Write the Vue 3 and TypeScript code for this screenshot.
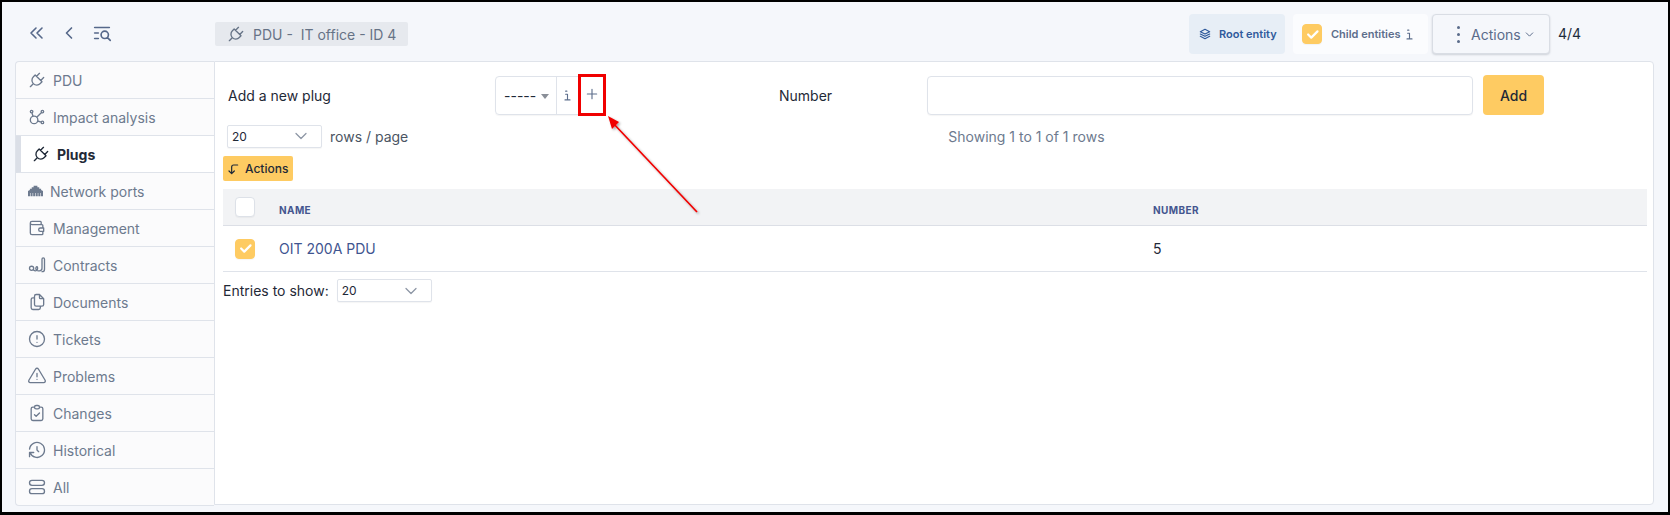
<script setup lang="ts">
const icons: Record<string, string> = {
  plug: 'M9.785 6l8.215 8.215l-2.054 2.054a5.81 5.81 0 1 1 -8.215 -8.215l2.054 -2.054z M4 20l3.5 -3.5 M15 4l-3.5 3.5 M20 9l-3.5 3.5',
  impact: 'M5.931 6.936l1.275 4.249 M12.813 16.794l4.251 1.275 M11.683 12.317l5.759 -5.759 M4 5.5a1.5 1.5 0 1 0 3 0a1.5 1.5 0 1 0 -3 0 M17 5.5a1.5 1.5 0 1 0 3 0a1.5 1.5 0 1 0 -3 0 M17 18.5a1.5 1.5 0 1 0 3 0a1.5 1.5 0 1 0 -3 0 M4 15.5a4.5 4.5 0 1 0 9 0a4.5 4.5 0 1 0 -9 0',
  wallet: 'M17 8v-3a1 1 0 0 0 -1 -1h-10a2 2 0 0 0 0 4h12a1 1 0 0 1 1 1v3m0 4v3a1 1 0 0 1 -1 1h-12a2 2 0 0 1 -2 -2v-12 M20 12v4h-4a2 2 0 0 1 0 -4h4',
  contract: 'M8 16a2.500 2.500 0 1 0 -5 0a2.500 2.500 0 1 0 5 0z M8 18c1 1 3 1 4 0c1 -1 1 -4 0 -4s-2 2 -1 3.500 M13 19h2c2 0 3 -1 3 -3v-11a1.500 1.500 0 0 1 3 0v12c0 2 -1 3 -3 3',
  files: 'M15 3v4a1 1 0 0 0 1 1h4 M18 17h-7a2 2 0 0 1 -2 -2v-10a2 2 0 0 1 2 -2h4l5 5v7a2 2 0 0 1 -2 2z M16 17v2a2 2 0 0 1 -2 2h-7a2 2 0 0 1 -2 -2v-10a2 2 0 0 1 2 -2h2',
  ticket: 'M3 12a9 9 0 1 0 18 0a9 9 0 1 0 -18 0 M12 8v4 M12 16h.01',
  problem: 'M12 9v4 M10.363 3.591l-8.106 13.534a1.914 1.914 0 0 0 1.636 2.871h16.214a1.914 1.914 0 0 0 1.636 -2.87l-8.106 -13.536a1.914 1.914 0 0 0 -3.274 0z M12 16h.01',
  change: 'M9 5h-2a2 2 0 0 0 -2 2v12a2 2 0 0 0 2 2h10a2 2 0 0 0 2 -2v-12a2 2 0 0 0 -2 -2h-2 M9 5a2 2 0 0 1 2 -2h2a2 2 0 0 1 2 2a2 2 0 0 1 -2 2h-2a2 2 0 0 1 -2 -2z M9 14l2 2l4 -4',
  history: 'M12 8v4l2 2 M3.050 11a9 9 0 1 1 .5 4m-.5 5v-5h5',
  all: 'M3 7a3 3 0 0 1 3 -3h12a3 3 0 0 1 3 3v0a3 3 0 0 1 -3 3h-12a3 3 0 0 1 -3 -3z M3 17a3 3 0 0 1 3 -3h12a3 3 0 0 1 3 3v0a3 3 0 0 1 -3 3h-12a3 3 0 0 1 -3 -3z',
  dleft: 'M11 7l-5 5l5 5 M17 7l-5 5l5 5',
  left: 'M15 6l-6 6l6 6',
  listSearch: 'M4 6h16 M4 12h4 M4 18h4 M11 14a4 4 0 1 0 8 0a4 4 0 1 0 -8 0 M18 17l3 3',
  stack: 'M12 4l-8 4l8 4l8 -4l-8 -4 M4 12l8 4l8 -4 M4 16l8 4l8 -4',
  info: 'M9 5h2 M9 10h3v9 M8 19h8',
  plus: 'M12 5v14 M5 12h14',
  corner: 'M19 6h-6a3 3 0 0 0 -3 3v10l-4 -4m8 0l-4 4',
  chevron: 'M6 9l6 6l6 -6',
  check: 'M5 12l5 5l10 -10',
}

const tabs = [
  { label: 'PDU', icon: 'plug' },
  { label: 'Impact analysis', icon: 'impact' },
  { label: 'Plugs', icon: 'plug', active: true },
  { label: 'Network ports', icon: 'ethernet' },
  { label: 'Management', icon: 'wallet' },
  { label: 'Contracts', icon: 'contract' },
  { label: 'Documents', icon: 'files' },
  { label: 'Tickets', icon: 'ticket' },
  { label: 'Problems', icon: 'problem' },
  { label: 'Changes', icon: 'change' },
  { label: 'Historical', icon: 'history' },
  { label: 'All', icon: 'all' },
]
</script>

<template>
  <div class="frame">
    <header class="topbar">
      <div class="nav-icons">
        <svg class="ic nav-a" viewBox="0 0 24 24"><path :d="icons.dleft" /></svg>
        <svg class="ic nav-b" viewBox="0 0 24 24"><path :d="icons.left" /></svg>
        <svg class="ic nav-c" viewBox="0 0 24 24"><path :d="icons.listSearch" /></svg>
      </div>
      <div class="crumb">
        <svg class="ic crumb-ic" viewBox="0 0 24 24"><path :d="icons.plug" /></svg>
        <span class="crumb-text">PDU -&nbsp; IT office - ID 4</span>
      </div>
      <div class="top-right">
        <div class="root-chip">
          <svg class="ic chip-ic" viewBox="0 0 24 24"><path :d="icons.stack" /></svg>
          <span>Root entity</span>
        </div>
        <div class="child-chip">
          <span class="box checked">
            <svg viewBox="0 0 24 24"><path :d="icons.check" /></svg>
          </span>
          <span class="child-label">Child entities</span>
          <svg class="ic child-i" viewBox="0 0 24 24"><path :d="icons.info" /></svg>
        </div>
        <button class="actions-btn" type="button">
          <span class="dots"><i></i><i></i><i></i></span>
          <span>Actions</span>
          <svg class="ic act-chev" viewBox="0 0 24 24"><path :d="icons.chevron" /></svg>
        </button>
        <span class="count">4/4</span>
      </div>
    </header>

    <div class="workspace">
      <nav class="tabs">
        <div
          v-for="t in tabs"
          :key="t.label"
          class="tab"
          :class="{ active: t.active, wide: t.icon === 'ethernet' }"
        >
          <svg v-if="t.icon === 'ethernet'" class="eth" viewBox="0 0 16 12">
            <path d="M0 11.500V6l2-1V3.500h2V2h2V.5h4V2h2v1.500h2V5l2 1v5.500h-2.200V8h-.6v3.500h-2.200V8h-.6v3.500H8.300V8h-.6v3.500H5.500V8h-.6v3.500H2.700V8h-.6v3.500z" />
          </svg>
          <svg v-else class="ic tab-ic" viewBox="0 0 24 24"><path :d="icons[t.icon]" /></svg>
          <span>{{ t.label }}</span>
        </div>
      </nav>

      <main class="panel">
        <div class="form-row">
          <label class="add-label">Add a new plug</label>
          <div class="group-cell">
            <div class="input-group">
              <div class="dash-select">
                <span>-----</span>
                <span class="caret"></span>
              </div>
              <div class="info-cell">
                <svg class="ic" viewBox="0 0 24 24"><path :d="icons.info" /></svg>
              </div>
              <div class="plus-cell">
                <svg class="ic" viewBox="0 0 24 24"><path :d="icons.plus" /></svg>
              </div>
            </div>
          </div>
          <label class="num-label">Number</label>
          <input class="num-input" type="text" />
          <button class="add-btn" type="button">Add</button>
        </div>

        <div class="pager-row">
          <div class="fake-select">
            <span>20</span>
            <svg class="ic" viewBox="0 0 24 24"><path :d="icons.chevron" /></svg>
          </div>
          <span class="rows-label">rows / page</span>
          <span class="showing">Showing 1 to 1 of 1 rows</span>
        </div>

        <button class="mass-btn" type="button">
          <svg class="ic" viewBox="0 0 24 24"><path :d="icons.corner" /></svg>
          <span>Actions</span>
        </button>

        <div class="table">
          <div class="thead">
            <div class="c-check"><span class="box"></span></div>
            <div class="c-name">NAME</div>
            <div class="c-num">NUMBER</div>
          </div>
          <div class="trow">
            <div class="c-check">
              <span class="box checked">
                <svg viewBox="0 0 24 24"><path :d="icons.check" /></svg>
              </span>
            </div>
            <div class="c-name link">OIT 200A PDU</div>
            <div class="c-num">5</div>
          </div>
        </div>

        <div class="entries">
          <span>Entries to show:</span>
          <div class="fake-select">
            <span>20</span>
            <svg class="ic" viewBox="0 0 24 24"><path :d="icons.chevron" /></svg>
          </div>
        </div>
      </main>
    </div>

    <svg class="annotation" width="1670" height="515" viewBox="0 0 1670 515">
      <defs>
        <filter id="soft" x="-20%" y="-20%" width="140%" height="140%">
          <feDropShadow dx="1.500" dy="1.500" stdDeviation="1" flood-color="#000" flood-opacity=".35" />
        </filter>
      </defs>
      <g filter="url(#soft)">
        <path d="M697 212L612 122" stroke="#f00000" stroke-width="1.700" fill="none" />
        <path d="M608 116L619 122L612 129z" fill="#f00000" />
      </g>
      <rect x="579.500" y="75.500" width="25" height="39" fill="none" stroke="#f00000" stroke-width="3" />
    </svg>
  </div>
</template>

<style>
html, body { margin: 0; padding: 0; }
</style>

<style scoped>
* { box-sizing: border-box; }
.frame {
  position: relative;
  width: 1670px;
  height: 515px;
  border: 2px solid #000;
  border-bottom-width: 3px;
  background: #f5f7fb;
  font-family: Inter, "Liberation Sans", sans-serif;
  font-size: 14px;
  color: #1f2937;
  overflow: hidden;
}
.ic {
  fill: none;
  stroke: currentColor;
  stroke-width: 2;
  stroke-linecap: round;
  stroke-linejoin: round;
  display: block;
  flex: none;
}
.topbar {
  height: 59px;
  display: flex;
  align-items: flex-start;
  color: #5f6f8c;
}
.nav-icons {
  width: 213px;
  height: 59px;
  display: flex;
  align-items: center;
  padding: 3px 0 0 23px;
  color: #56688a;
}
.nav-a { width: 24px; height: 24px; stroke-width: 1.600; }
.nav-b { width: 20px; height: 20px; margin-left: 10px; }
.nav-c { width: 22px; height: 22px; margin-left: 12px; stroke-width: 1.800; }
.crumb {
  margin-top: 20px;
  width: 193px;
  height: 24px;
  background: #e6e9ee;
  border-radius: 2px;
  display: flex;
  align-items: center;
  padding-left: 11px;
  color: #667386;
}
.crumb-ic { width: 20px; height: 20px; stroke-width: 1.600; }
.crumb-text { margin-left: 7px; white-space: nowrap; }
.top-right {
  margin-left: auto;
  margin-right: 0;
  width: 479px;
  display: flex;
  align-items: flex-start;
  margin-top: 12px;
}
.root-chip {
  width: 96px;
  height: 40px;
  background: #e7eef6;
  border-radius: 4px;
  display: flex;
  align-items: center;
  padding-left: 9px;
  font-size: 11px;
  font-weight: 600;
  color: #2f5a9c;
}
.chip-ic { width: 14px; height: 14px; margin-right: 7px; }
.child-chip {
  margin-left: 8px;
  width: 135px;
  height: 40px;
  background: #fbfcfe;
  border-radius: 4px;
  display: flex;
  align-items: center;
  padding-left: 9px;
  font-size: 11px;
  font-weight: 600;
  color: #5d6e8c;
}
.child-label { margin-left: 9px; white-space: nowrap; }
.child-i { width: 15px; height: 15px; margin-left: 1px; stroke-width: 1.800; }
.box {
  width: 20px;
  height: 20px;
  border-radius: 4px;
  border: 1px solid #dde1e8;
  background: #fff;
  display: block;
  flex: none;
  box-shadow: 0 1px 1px rgba(0, 0, 0, .04);
}
.box.checked {
  background: #fecb62;
  border-color: #fecb62;
  display: flex;
  align-items: center;
  justify-content: center;
}
.box.checked svg {
  width: 15px;
  height: 15px;
  fill: none;
  stroke: #fff;
  stroke-width: 3.500;
  stroke-linecap: round;
  stroke-linejoin: round;
}
.actions-btn {
  margin-left: 4px;
  width: 118px;
  height: 40px;
  border: 1px solid #d9dde4;
  border-radius: 4px;
  background: #f5f7fb;
  box-shadow: 0 1px 2px rgba(30, 40, 60, .18);
  display: flex;
  align-items: center;
  padding: 0 0 0 24px;
  font: inherit;
  color: #5a6b8a;
}
.dots { display: flex; flex-direction: column; gap: 4px; margin-right: 11px; }
.dots i { width: 3px; height: 3px; border-radius: 50%; background: #5a6b8a; display: block; }
.act-chev { width: 13px; height: 13px; margin-left: 2px; stroke-width: 1.800; }
.count { margin-left: 8px; line-height: 40px; color: #1f2d3d; }

.workspace {
  display: flex;
  align-items: flex-start;
  padding-left: 13px;
}
.tabs {
  width: 199px;
  flex: none;
  border: 1px solid #dfe3ea;
  border-right: 0;
  border-radius: 4px 0 0 4px;
  background: #fbfbfc;
  overflow: hidden;
}
.tab {
  height: 37px;
  border-bottom: 1px solid #dfe3ea;
  display: flex;
  align-items: center;
  padding-left: 11px;
  color: #6d7a8e;
  white-space: nowrap;
}
.tab:last-child { border-bottom: 0; height: 36px; }
.tab-ic { width: 20px; height: 20px; margin-right: 6px; stroke-width: 1.600; }
.tab.wide { padding-left: 12px; }
.eth { width: 15px; height: 12px; margin-right: 7px; fill: #6d7a8e; flex: none; }
.tab.active {
  background: #fff;
  border-left: 5px solid #dbdfe7;
  padding-left: 10px;
  font-weight: 700;
  color: #1f2937;
  margin-right: 0;
}
.tab.active .tab-ic { color: #1f2937; }
.panel {
  width: 1440px;
  height: 444px;
  background: #fff;
  border: 1px solid #dfe3ea;
  border-radius: 0 4px 4px 0;
  padding: 13px 0 0 8px;
}
.form-row { display: flex; align-items: center; height: 40px; }
.add-label { width: 272px; padding-left: 5px; flex: none; }
.group-cell { width: 284px; flex: none; }
.input-group {
  width: 111px;
  height: 39px;
  border: 1px solid #dfe3ea;
  border-radius: 4px;
  display: flex;
  box-shadow: 0 1px 1px rgba(0, 0, 0, .04);
}
.dash-select {
  width: 61px;
  display: flex;
  align-items: center;
  padding-left: 8px;
  border-right: 1px solid #dfe3ea;
  color: #1f2937;
}
.caret {
  margin-left: 5px;
  margin-top: 2px;
  border-left: 4px solid transparent;
  border-right: 4px solid transparent;
  border-top: 5px solid #8a8f98;
}
.info-cell {
  width: 21px;
  display: flex;
  align-items: center;
  justify-content: center;
  color: #5d6e8c;
}
.info-cell .ic { width: 15px; height: 15px; stroke-width: 1.800; }
.plus-cell {
  flex: 1;
  display: flex;
  align-items: center;
  justify-content: center;
  color: #5d6e8c;
  padding-bottom: 3px;
}
.plus-cell .ic { width: 16px; height: 16px; stroke-width: 1.700; }
.num-label { width: 148px; flex: none; }
.num-input {
  width: 546px;
  height: 39px;
  flex: none;
  border: 1px solid #dfe3ea;
  border-radius: 4px;
  background: #fff;
  outline: none;
  box-shadow: 0 1px 1px rgba(0, 0, 0, .04);
}
.add-btn {
  margin-left: 10px;
  width: 61px;
  height: 40px;
  border: 0;
  border-radius: 4px;
  background: #fecb62;
  font: inherit;
  font-weight: 500;
  color: #1f2937;
}
.pager-row {
  display: flex;
  align-items: center;
  height: 22px;
  margin-top: 10px;
  padding-left: 4px;
}
.fake-select {
  width: 95px;
  height: 23px;
  border: 1px solid #dfe3ea;
  border-radius: 2px;
  background: #fff;
  display: flex;
  align-items: center;
  justify-content: space-between;
  padding: 0 10px 0 4px;
  font-size: 12px;
  color: #1f2937;
  box-shadow: 0 1px 1px rgba(0, 0, 0, .04);
  flex: none;
}
.fake-select .ic { width: 20px; height: 20px; color: #8d96a5; stroke-width: 1.500; }
.rows-label { margin-left: 8px; color: #4b5563; }
.showing { margin-left: 540px; color: #6d7a8e; }
.mass-btn {
  margin-top: 9px;
  width: 70px;
  height: 25px;
  border: 0;
  border-radius: 2px;
  background: #fecb62;
  display: flex;
  align-items: center;
  padding: 0 0 0 2px;
  font: inherit;
  font-size: 12px;
  font-weight: 500;
  color: #1f2937;
}
.mass-btn .ic { width: 16px; height: 16px; margin-right: 4px; stroke-width: 1.800; }
.table { margin-top: 8px; width: 1424px; }
.thead, .trow { display: grid; grid-template-columns: 56px 874px 1fr; align-items: center; }
.thead {
  height: 37px;
  background: #f2f3f5;
  border-bottom: 1px solid #dcdfe6;
  font-size: 10px;
  font-weight: 700;
  letter-spacing: .4px;
  color: #44558f;
}
.thead .c-name, .thead .c-num { padding-top: 6px; }
.trow { height: 46px; border-bottom: 1px solid #dfe3ea; color: #1f2937; }
.c-check { padding-left: 12px; }
.link { color: #3f5590; }
.entries {
  display: flex;
  align-items: center;
  gap: 8px;
  margin-top: 7px;
  color: #1f2937;
}
.annotation {
  position: absolute;
  left: -2px;
  top: -2px;
  pointer-events: none;
}
</style>
